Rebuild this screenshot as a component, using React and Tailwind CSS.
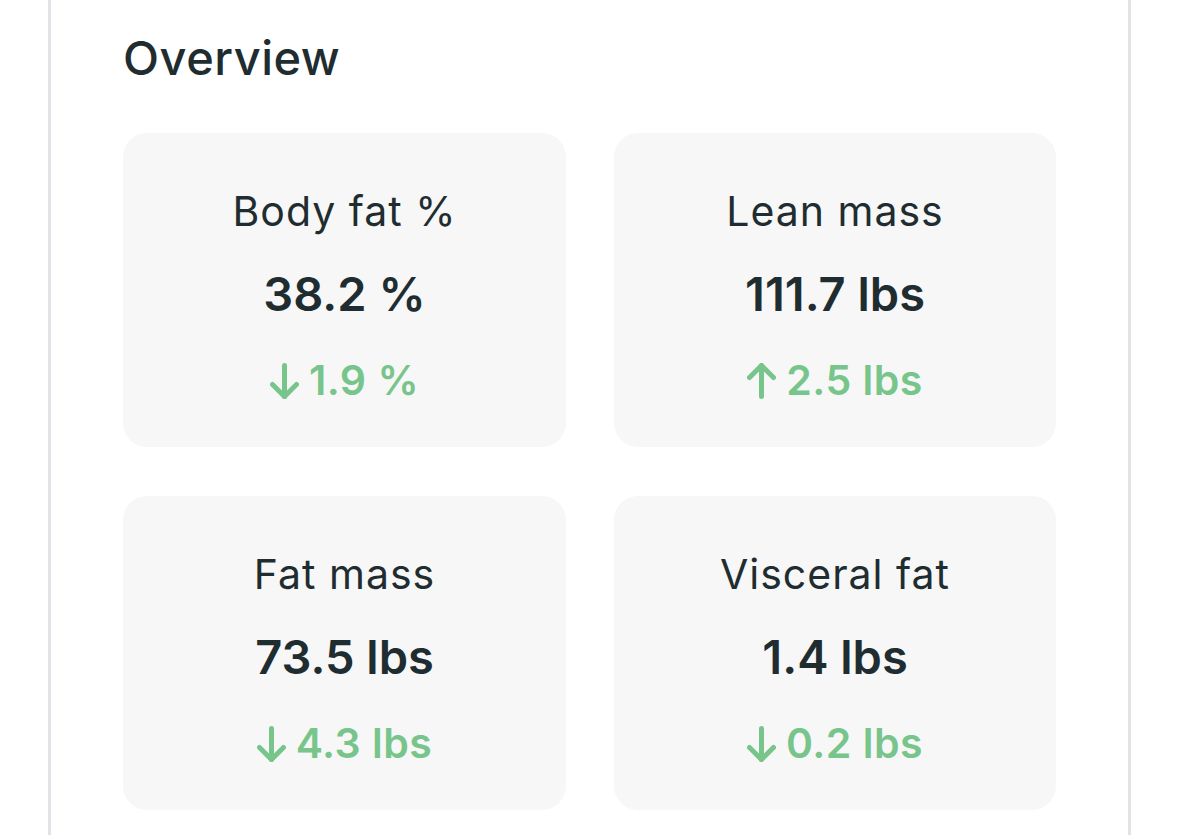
import { useState } from "react";

const stats = [
    { label: "Body fat %", value: "38.2 %", change: "1.9 %", dir: "down" },
    { label: "Lean mass", value: "111.7 lbs", change: "2.5 lbs", dir: "up" },
    { label: "Fat mass", value: "73.5 lbs", change: "4.3 lbs", dir: "down" },
    { label: "Visceral fat", value: "1.4 lbs", change: "0.2 lbs", dir: "down" },
];

const Arrow = ({ dir }) => (
    <svg
        width="29"
        height="36"
        viewBox="0 0 29 36"
        fill="none"
        stroke="currentColor"
        strokeWidth="5"
        strokeLinecap="round"
        strokeLinejoin="round"
        className={dir === "up" ? "rotate-180" : ""}
    >
        <path d="M14.5 2.5V33.5" />
        <path d="M2.5 21.5L14.5 33.5L26.5 21.5" />
    </svg>
);

const StatCard = ({ stat }) => (
    <div className="h-[314px] rounded-[24px] bg-[#f7f7f7] pt-[58px] flex flex-col items-center">
        <p className="text-[41px] leading-none font-normal tracking-[1px]">{stat.label}</p>
        <p className="mt-[38px] text-[47px] leading-none font-semibold">{stat.value}</p>
        <div className="mt-[43px] flex items-center gap-[10px] text-[#78c58c]">
            <Arrow dir={stat.dir} />
            <span className="text-[41px] leading-none font-semibold tracking-[0.5px]">{stat.change}</span>
        </div>
    </div>
);

const App = () => {
    const [items] = useState(stats);

    return (
        <div className="min-h-screen bg-white text-[#1f2d31] font-['Inter',sans-serif]">
            <div className="ml-[48px] w-[1083px] h-[835px] border-x-[3px] border-[#e2e2e7] px-[72px] pt-[34px]">
                <h1 className="text-[47px] leading-none font-medium tracking-[0.5px]">Overview</h1>
                <div className="mt-[52px] grid grid-cols-[443px_442px] gap-x-[48px] gap-y-[49px]">
                    {items.map((stat) => (
                        <StatCard key={stat.label} stat={stat} />
                    ))}
                </div>
            </div>
        </div>
    );
};

export default App;
